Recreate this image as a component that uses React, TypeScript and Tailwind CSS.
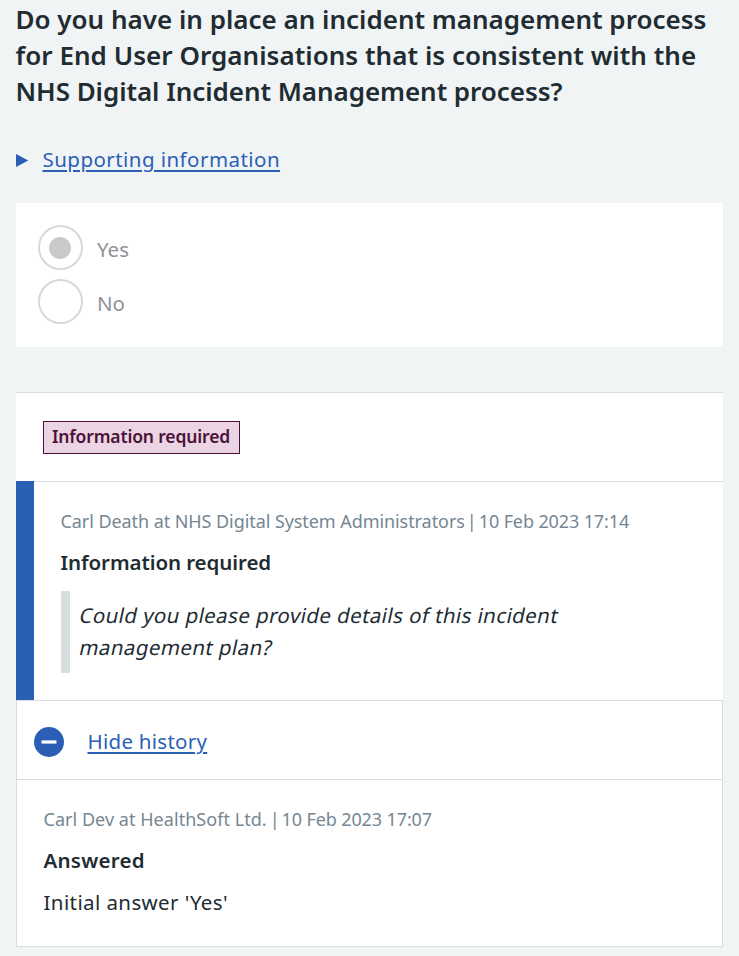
import React from "react";

function Radio({ label, checked }: { label: string; checked?: boolean }) {
  return (
    <div className="flex h-[45px] items-center">
      <span className="flex size-[45px] shrink-0 items-center justify-center rounded-full border-2 border-[#d5d8dc] bg-white">
        {checked && <span className="mr-px size-[22px] rounded-full bg-[#c8c9ca]" />}
      </span>
      <span className="ml-3.5 pt-[3px] text-[20.5px] leading-[30px] text-[#8f9296]">{label}</span>
    </div>
  );
}

function Meta({ author, date }: { author: React.ReactNode; date: string }) {
  return (
    <p className="flex w-fit text-[18px] leading-7 whitespace-nowrap text-[#768692]">
      {author}
      <span className="mr-[2px] ml-[2px]">|</span>
      <span className="tracking-[-0.12px]">{date}</span>
    </p>
  );
}

export default function App() {
  return (
    <main className="h-[956px] w-[739px] overflow-hidden bg-[#f0f4f5] px-4 pt-px font-['Noto_Sans','Open_Sans',sans-serif] text-[#212b32]">
      <h1 className="-ml-[0.5px] text-[26px] leading-9 font-semibold whitespace-nowrap">
        <span className="block w-fit">Do you have in place an incident management process</span>
        <span className="block w-fit tracking-[0.04px]">for End User Organisations that is consistent with the</span>
        <span className="block w-fit tracking-[-0.05px]">NHS Digital Incident Management process?</span>
      </h1>

      <div className="mt-[35px] flex h-8 items-center text-[#2b5fb5]">
        <svg className="size-[13px] shrink-0" viewBox="0 0 13 13" fill="currentColor">
          <path d="M0 0L12.3 6.5L0 13Z" />
        </svg>
        <a className="mb-0.5 ml-[13.5px] text-[20.5px] leading-8 tracking-[0.45px] underline decoration-2 underline-offset-[3px]">Supporting information</a>
      </div>

      <section className="mt-[27px] flex h-36 flex-col gap-[9px] bg-white pt-[22px] pl-[22px]">
        <Radio label="Yes" checked />
        <Radio label="No" />
      </section>

      <section className="mt-[45px] border-t border-[#d8dde0] bg-white">
        <div className="h-[88px] pt-7 pl-[27px]">
          <strong className="flex h-[33px] w-[197px] items-center justify-center border border-[#4a1138] bg-[#ebd5e4] pr-px pb-[3px] text-[17.5px] font-semibold tracking-[-0.15px] whitespace-nowrap text-[#4a1138]">
            Information required
          </strong>
        </div>
        <div className="flex h-[219px]">
          <div className="w-[18px] shrink-0 bg-[#2b5fb5]" />
          <div className="flex-1 border-t border-[#d8dde0] pt-[25px] pl-[26.5px]">
            <Meta
              author={<span className="tracking-[-0.07px]">Carl Death at NHS Digital System Administrators</span>}
              date="10 Feb 2023 17:14"
            />
            <h2 className="mt-[11px] w-fit text-[20.5px] leading-8 font-semibold tracking-[-0.08px]">Information required</h2>
            <blockquote className="mt-[13px] h-[82px] border-l-[9px] border-[#d8dde0] pt-2 pl-2.5 text-[20.5px] leading-8 whitespace-nowrap">
              <span className="block w-fit -skew-x-12 tracking-[0.4px]">Could you please provide details of this incident</span>
              <span className="block w-fit -skew-x-12 tracking-[0.4px]">management plan?</span>
            </blockquote>
          </div>
        </div>
        <div className="h-[247px] border border-[#d8dde0]">
          <div className="flex h-[79px] items-center border-b border-[#d8dde0] pt-1 pl-[17px] text-[#2b5fb5]">
            <svg className="size-[30px] shrink-0" viewBox="0 0 30 30">
              <circle cx="15" cy="15" r="15" fill="currentColor" />
              <path d="M7.5 15H22.5" stroke="white" strokeWidth="3.2" />
            </svg>
            <a className="mb-0.5 ml-[23.5px] text-[20.5px] leading-8 tracking-[0.27px] underline decoration-2 underline-offset-[3px]">Hide history</a>
          </div>
          <div className="pt-[25px] pl-[26.5px]">
            <Meta author={<span className="mr-px tracking-[0.04px]">Carl Dev at HealthSoft Ltd.</span>} date="10 Feb 2023 17:07" />
            <h2 className="mt-[11px] w-fit text-[20.5px] leading-8 font-semibold tracking-[0.25px]">Answered</h2>
            <p className="mt-2.5 w-fit text-[20.5px] leading-8 tracking-[0.4px]">Initial answer 'Yes'</p>
          </div>
        </div>
      </section>
    </main>
  );
}
